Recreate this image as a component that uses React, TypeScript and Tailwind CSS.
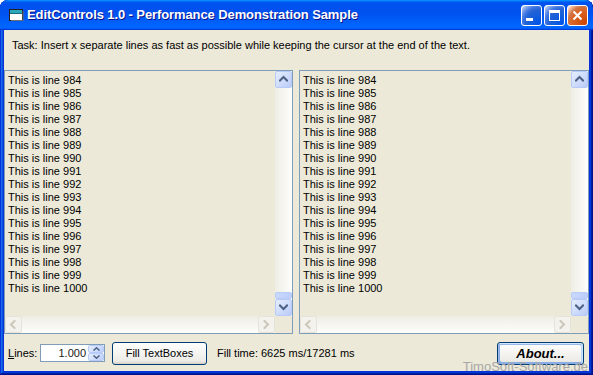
import React from "react";

const lines = Array.from({ length: 17 }, (_, i) => `This is line ${984 + i}`);

function Chev({ dir, color }: { dir: "up" | "down" | "left" | "right"; color: string }) {
  const d =
    dir === "up"
      ? "M1 5.5 L4.5 2 L8 5.5"
      : dir === "down"
      ? "M1 2.5 L4.5 6 L8 2.5"
      : dir === "left"
      ? "M5.5 1 L2 4.5 L5.5 8"
      : "M2.5 1 L6 4.5 L2.5 8";
  return (
    <svg width="9" height="9" viewBox="0 0 9 9">
      <path d={d} fill="none" stroke={color} strokeWidth="2" strokeLinecap="square" />
    </svg>
  );
}

function ScrollBtn({ dir }: { dir: "up" | "down" }) {
  return (
    <div className="flex h-[17px] w-[17px] items-center justify-center rounded-[2px] border border-[#b8cbf8] bg-[linear-gradient(135deg,#e6eefd_0%,#cbd9fb_60%,#b9cbf6_100%)]">
      <Chev dir={dir} color="#4d6185" />
    </div>
  );
}

function DisBtn({ dir }: { dir: "left" | "right" }) {
  return (
    <div className="flex h-[17px] w-[17px] items-center justify-center rounded-[2px] border border-[#e6e4da] bg-[#f3f2ec]">
      <Chev dir={dir} color="#c9c7ba" />
    </div>
  );
}

function EditBox({ width }: { width: string }) {
  return (
    <div className={`flex h-[264px] ${width} flex-col border border-[#7f9db9] bg-[#ece9d8]`}>
      <div className="flex min-h-0 flex-1">
        <div className="flex-1 pl-[3px] pt-[3px] text-[11px] leading-[13px] text-black">
          {lines.map((l) => (
            <div key={l}>{l}</div>
          ))}
        </div>
        <div className="flex w-[17px] flex-col bg-[linear-gradient(90deg,#eeede5,#fefefb)]">
          <ScrollBtn dir="up" />
          <div className="flex flex-1 flex-col justify-end">
            <div className="h-[7px] rounded-[2px] border border-[#b8cbf8] bg-[linear-gradient(90deg,#c9d8fc,#bccefa)]" />
          </div>
          <ScrollBtn dir="down" />
        </div>
      </div>
      <div className="flex h-[17px]">
        <div className="flex flex-1 bg-[linear-gradient(180deg,#eeede5,#fefefb)]">
          <DisBtn dir="left" />
          <div className="flex-1" />
          <DisBtn dir="right" />
        </div>
        <div className="w-[17px] bg-[#ece9d8]" />
      </div>
    </div>
  );
}

export default function App() {
  return (
    <div
      className="relative flex h-[375px] w-[593px] flex-col overflow-hidden rounded-t-[8px] bg-[#0831d9] shadow-[inset_-1px_-1px_#00138c,inset_1px_1px_#0831d9,inset_-2px_-2px_#001ea0,inset_2px_2px_#166aee,inset_-3px_-3px_#003bda,inset_3px_3px_#0855dd]"
      style={{ fontFamily: '"Liberation Sans", Arial, sans-serif' }}
    >
      {/* Title bar */}
      <div className="flex h-[30px] items-center rounded-t-[8px] bg-[linear-gradient(180deg,#0997ff,#0053ee_8%,#0050ee_40%,#0066ff_88%,#0066ff_93%,#005bff_95%,#003dd7_96%,#003dd7)] pl-[8px] pr-[5px]">
        <svg width="16" height="16" viewBox="0 0 16 16" className="mr-[3px]">
          <rect x="1.5" y="2.5" width="13" height="11" fill="#fff" stroke="#202020" />
          <rect x="2" y="3" width="12" height="3" fill="#2aa7b8" />
          <rect x="2" y="6" width="12" height="1" fill="#1a6a7a" />
          <path d="M3 13.5 H15 V4" fill="none" stroke="#6b6b6b" />
        </svg>
        <div className="flex-1 text-[13px] font-bold tracking-[-0.1px] text-white [text-shadow:1px_1px_#0f1089]">
          EditControls 1.0 - Performance Demonstration Sample
        </div>
        <div className="flex gap-[2px]">
          <div className="relative h-[21px] w-[21px] rounded-[3px] border border-white bg-[radial-gradient(circle_at_90%_90%,#0054e9_0%,#2263d5_55%,#4479e4_70%,#a3bbec_90%,#fff_100%)]">
            <div className="absolute bottom-[4px] left-[4px] h-[3px] w-[7px] bg-white" />
          </div>
          <div className="relative h-[21px] w-[21px] rounded-[3px] border border-white bg-[radial-gradient(circle_at_90%_90%,#0054e9_0%,#2263d5_55%,#4479e4_70%,#a3bbec_90%,#fff_100%)]">
            <div className="absolute left-[4px] top-[4px] h-[11px] w-[11px] border border-t-[3px] border-white" />
          </div>
          <div className="flex h-[21px] w-[21px] items-center justify-center rounded-[3px] border border-white bg-[radial-gradient(circle_at_90%_90%,#cc4600_0%,#dc6527_55%,#cd7546_70%,#ffccb2_90%,#fff_100%)]">
            <svg width="11" height="11" viewBox="0 0 11 11">
              <path d="M1.5 1.5 L9.5 9.5 M9.5 1.5 L1.5 9.5" stroke="#fff" strokeWidth="2" />
            </svg>
          </div>
        </div>
      </div>

      {/* Body */}
      <div className="mx-[4px] mb-[4px] flex flex-1 flex-col bg-[#ece9d8] text-[11px] text-black">
        <div className="h-[40px] pl-[8px] pt-[9px] leading-[13px]">
          Task: Insert x separate lines as fast as possible while keeping the cursor at the end of the text.
        </div>
        <div className="flex gap-[6px]">
          <EditBox width="w-[289px]" />
          <EditBox width="w-[290px]" />
        </div>
        <div className="flex flex-1 items-start pl-[4px] pt-[8px]">
          <div className="mt-[5px] w-[32px] leading-[13px]">
            <span className="underline">L</span>ines:
          </div>
          <div className="mt-[2px] flex h-[18px] w-[65px] items-center border border-[#7f9db9] bg-white pl-[2px]">
            <div className="flex-1 pr-[2px] text-right text-[#1a1a1a]">1.000</div>
            <div className="flex h-[16px] w-[16px] flex-col gap-[0px]">
              <div className="flex h-[8px] items-center justify-center rounded-[2px] border border-[#b8cbf8] bg-[linear-gradient(135deg,#e6eefd,#bccefa)]">
                <svg width="7" height="4" viewBox="0 0 7 4"><path d="M0.5 3.5 L3.5 0.8 L6.5 3.5" fill="none" stroke="#4d6185" strokeWidth="1.5" /></svg>
              </div>
              <div className="flex h-[8px] items-center justify-center rounded-[2px] border border-[#b8cbf8] bg-[linear-gradient(135deg,#e6eefd,#bccefa)]">
                <svg width="7" height="4" viewBox="0 0 7 4"><path d="M0.5 0.5 L3.5 3.2 L6.5 0.5" fill="none" stroke="#4d6185" strokeWidth="1.5" /></svg>
              </div>
            </div>
          </div>
          <button className="ml-[7px] flex h-[23px] w-[95px] items-center justify-center rounded-[3px] border border-[#003c74] bg-[linear-gradient(180deg,#fff,#ecebe6_86%,#d6d0c5)] text-[11px] leading-[13px]">
            Fill TextBoxes
          </button>
          <div className="ml-[10px] mt-[5px] leading-[13px]">Fill time: 6625 ms/17281 ms</div>
          <div className="flex-1" />
          <button className="mr-[5px] flex h-[23px] w-[87px] items-center justify-center rounded-[3px] border border-[#003c74] bg-[linear-gradient(180deg,#fff,#ecebe6_86%,#d6d0c5)] text-[13px] font-bold italic leading-[13px] shadow-[inset_-1px_1px_#cee7ff,inset_1px_2px_#98b8ea,inset_-2px_2px_#bcd4f6,inset_1px_-1px_#89ade4,inset_2px_-2px_#89ade4]">
            About...
          </button>
        </div>
      </div>
      <div className="absolute bottom-[2px] right-[5px] z-10 text-[13px] leading-[13px] text-[#a7a7a7]">
        TimoSoft-Software.de
      </div>
    </div>
  );
}
